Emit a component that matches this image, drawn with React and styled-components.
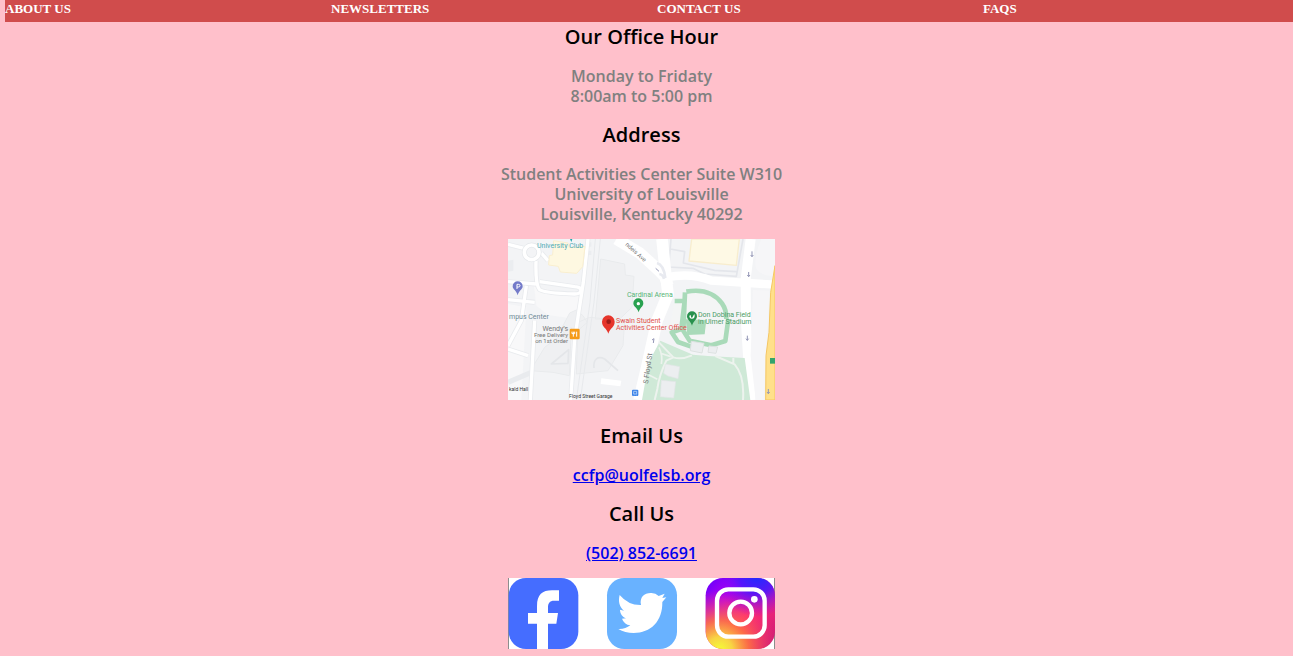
import React from 'react';
import styled, { createGlobalStyle } from 'styled-components';

const GlobalStyle = createGlobalStyle`
  body {
    margin: 0;
    background: pink;
  }
`;

const Nav = styled.nav`
  display: grid;
  grid-template-columns: repeat(4, 1fr);
  gap: 16px;
  height: 22px;
  margin-left: 5px;
  background: #d04c4c;
`;

const NavLink = styled.a`
  color: white;
  font: bold 13px/18px 'Liberation Serif', serif;
  text-decoration: none;
  text-transform: uppercase;
`;

const Main = styled.main`
  display: flex;
  flex-direction: column;
  align-items: center;
  margin-right: 10px;
  padding: 1px 0 7px;
  font-family: 'Comic Sans MS', 'Open Sans', sans-serif;
  text-align: center;
`;

const Heading = styled.h2`
  margin: 0;
  padding-top: ${(p) => p.$space || 0}px;
  font-size: 20px;
  line-height: 28px;
  font-weight: 600;
  color: black;
`;

const Text = styled.p`
  margin: 15px 0;
  font-size: 16px;
  line-height: 20px;
  font-weight: 600;
  color: gray;
`;

const TextLink = styled.a`
  color: #0000ee;
`;

const MapPicture = styled.svg`
  display: block;
  width: 267px;
  height: 161px;
  font-family: Roboto, sans-serif;
`;

const SocialPicture = styled.svg`
  display: block;
  width: 267px;
  height: 71px;
`;

const CampusMap = () => (
  <MapPicture viewBox="0 0 267 161" role="img" aria-label="Map of the campus">
    <rect width="267" height="161" fill="#f3f4f6" />
    <g transform="scale(.33333)" fill="none" strokeLinejoin="round">
      <path d="M0 195 55 205 40 483H0z M78 142 215 170 205 240 120 228 85 200z" fill="#f8f8f9" />
      <path d="M278 60 350 75 352 108 378 112 372 205 335 240 262 240z M185 222 205 213 225 230 238 250 180 300 160 270z M67 395 110 325 190 265 184 410 135 400z M210 250 245 235 350 245 345 320 300 395 205 405z" fill="#eff0f2" stroke="#e9ebed" strokeWidth="3" />
      <path d="M0 65 16 62V95L0 98z M236 10h14v13h-14z M236 35h14v13h-14z" fill="#ebedf0" />
      <path d="M258 387C255 360 270 350 290 360L330 395 M130 375 182 332 180 373z" stroke="#e4e6e9" strokeWidth="5" />
      <path d="M0 16 48 28M100 42 120 65M0 128 84 135M84 65Q82 135 94 151Q105 162 200 165C225 165 225 144 200 143L95 128 M240 0 226 130 200 300 188 483 M0 182 80 190 M55 140 40 245 0 320 M80 245 67 483 M0 330 60 350 M0 430 70 400" stroke="#e9ebee" strokeWidth="15" />
      <path d="M262 0 246 190 205 483 M277 0 258 190 217 483" stroke="#e7e9ec" strokeWidth="3" />
      <path d="M0 16 48 28M100 42 120 65M0 128 84 135M84 65Q82 135 94 151Q105 162 200 165C225 165 225 144 200 143L95 128 M240 0 226 130 200 300 188 483 M0 182 80 190 M55 140 40 245 0 320 M80 245 67 483 M0 330 60 350" stroke="#fff" strokeWidth="10" />
      <circle cx="71" cy="40" r="22" stroke="#e4e7ea" strokeWidth="15" />
      <circle cx="71" cy="40" r="22" stroke="#fff" strokeWidth="11" />
      <path d="M137 5 180 12 183 26 231 22 224 83 206 103 157 99 151 82 122 78 124 50 134 48z" fill="#fef8e1" stroke="#faefcf" strokeWidth="3" />
      <path d="M489 0 482 84 555 88 590 105 685 112 705 0 M487 30 530 38 526 72 620 94 685 98" stroke="#e4e6eb" strokeWidth="5" />
      <path d="M551 0 543 66 685 79 694 0z" fill="#fef9e5" stroke="#f8edce" strokeWidth="4" />
      <path d="M325 0 395 42 450 92 470 112 480 140M462 0 472 95 480 165 447 245 415 390 393 483" stroke="#fff" strokeWidth="35" />
      <path d="M475 115Q550 100 610 125L801 137" stroke="#fff" strokeWidth="25" />
      <path d="M728 0 713 120 714 250 728 483" stroke="#fff" strokeWidth="30" />
      <path d="M447 72q20 5 25 45M454 105q12 2 14 15" stroke="#e8eaf0" strokeWidth="8" />
      <path d="M457 305 555 347 600 351 710 357 727 483H402L422 370z" fill="#cfe9d7" />
      <path d="M453 310 496 355 475 365Q453 410 448 450L440 483M496 355Q520 363 552 349M622 351 680 376Q710 410 705 483M676 357V373" stroke="#edf3ee" strokeWidth="6" />
      <path d="M423 408 448 421M453 325Q465 350 460 375M458 343 488 353" stroke="#edf3ee" strokeWidth="5" />
      <path d="M472 375 515 383 510 419 480 411 467 403z M460 424 503 428 497 477 457 473z" fill="#eceef0" stroke="#e3e6e7" strokeWidth="2" />
      <path d="M500 179 530 179 535 155Q620 145 655 225L666 240 660 304 630 320 560 315 550 330 520 312 484 285 490 240z" fill="#f4f5f5" />
      <path d="M535 158Q606 145 642 193Q656 213 655 240M661 240 652 306 610 319 545 305 526 275 531 160 M500 186 530 186 520 270 491 280 510 309 550 323" stroke="#a9dab9" strokeWidth="14" />
      <path d="M533 241 595 243 590 286 538 288z" fill="#a9dab9" />
      <path d="M550 307 588 313 582 342 547 335z M603 321 629 324 624 343 600 340z" fill="#eceef0" stroke="#dde2e1" strokeWidth="3" />
      <path d="M760 0Q735 60 745 90Q760 112 801 112V0z M735 153 784 155 779 245 767 483H743L728 350z" fill="#f6f6f8" />
      <path d="M801 80 788 160 783 280 774 350 773 483H801z" fill="#ffe08a" stroke="#f5c662" strokeWidth="3" />
      <path d="M692 37v16l-4-5m4 5 4-5" transform="translate(40 0)" stroke="#9295b5" strokeWidth="3" />
      <path d="M722 99v14l-4-5m4 5 4-5M443 88l10 9M436 312l2-13-6 4M718 290v14l-4-5m4 5 4-5M781 450v14l-4-5m4 5 4-5" stroke="#9295b5" strokeWidth="3" />
      <path d="M786 357h15v17h-15z" fill="#32a46b" />
      <path d="M280 418 340 425 337 442 278 435z" fill="#fff" />
      <path d="M29 169C25 154 14 152 14 142a15 15 0 1 1 30 0c0 10-11 12-15 27z" fill="#747bc9" />
      <path d="M27 150V136h4q5 0 5 4t-5 4h-4" stroke="#fff" strokeWidth="3" />
      <path d="M392 220C388 206 376 204 376 193a15 15 0 1 1 30 0c0 11-11 13-14 27z" fill="#28a150" />
      <circle cx="391" cy="194" r="5" fill="#fff" />
      <path d="M552 260C548 246 537 243 537 232a15 15 0 1 1 30 0c0 11-11 14-15 28z" fill="#28914d" />
      <path d="M544 230q0 9 8 9t8-9-5 2-7-4z" fill="#fff" />
      <path d="M301 284C296 266 282 265 282 248a19 19 0 1 1 38 0c0 17-14 18-19 36z" fill="#e6352b" />
      <circle cx="302" cy="248" r="7" fill="#9f1d19" />
      <rect x="185" y="269" width="30" height="32" rx="4" fill="#f59b18" />
      <path d="M196 278v15m-4-15v6h8v-6m6 0v15" stroke="#fff" strokeWidth="3" />
      <rect x="372" y="452" width="19" height="19" rx="3" fill="#3c83e8" />
      <path d="M377 457h9v8h-9z M377 468h2m5 0h2" stroke="#d5e7fc" strokeWidth="2" />
      <path d="M186 0h7l-3 9z" fill="#25a6af" />
    </g>
    <g fontSize="6">
      <text x="29" y="9" fontSize="7" fill="#4eabb4">University Club</text>
      <text x="1" y="80" fontSize="7" fill="#6f8995">mpus Center</text>
      <text x="119" y="58" fontSize="7" fill="#55b477">Cardinal Arena</text>
      <text x="190" y="78" fontSize="7" fill="#4b9c68">Don Dobina Field</text>
      <text x="190" y="85" fontSize="7" fill="#4b9c68">in Ulmer Stadium</text>
      <text x="108" y="84" fontSize="7" fill="#e1504b">Swain Student</text>
      <text x="108" y="91" fontSize="7" fill="#e1504b">Activities Center Office</text>
      <g fill="#777" textAnchor="end">
        <text x="60" y="92" fontSize="7">Wendy’s</text>
        <text x="60" y="98">Free Delivery</text>
        <text x="60" y="104">on 1st Order</text>
      </g>
      <text x="1" y="152" fontSize="5" fill="#333">kald Hall</text>
      <text x="61" y="159" fontSize="5" fill="#333">Floyd Street Garage</text>
      <text transform="translate(140 145) rotate(-82)" fontSize="7" fill="#777">S Floyd St</text>
      <text transform="translate(117 6) rotate(42)" fontSize="6" fill="#777">ndeis Ave</text>
    </g>
  </MapPicture>
);

const SocialIcons = () => (
  <SocialPicture viewBox="0 0 801 213" role="img" aria-label="Facebook, Twitter and Instagram">
    <defs>
      <linearGradient id="insta" x1="0" y1="0" x2="1" y2="1">
        <stop offset="0" stopColor="#5f00ff" />
        <stop offset=".28" stopColor="#b500ee" />
        <stop offset=".55" stopColor="#ff277b" />
        <stop offset="1" stopColor="#c51c72" />
      </linearGradient>
      <radialGradient id="instaWarm" cx=".2" cy="1.02" r=".85">
        <stop offset="0" stopColor="#f4ff35" />
        <stop offset=".22" stopColor="#f8d444" />
        <stop offset=".5" stopColor="#ff773f" stopOpacity=".85" />
        <stop offset="1" stopColor="#ff316f" stopOpacity="0" />
      </radialGradient>
      <radialGradient id="instaBlue" cx=".75" cy="-.05" r=".6">
        <stop offset="0" stopColor="#1830ff" />
        <stop offset=".45" stopColor="#4a16ff" stopOpacity=".9" />
        <stop offset="1" stopColor="#8a00ff" stopOpacity="0" />
      </radialGradient>
    </defs>
    <rect width="801" height="213" fill="#fff" />
    <path d="M1 0v213M800 0v213" stroke="#777" strokeWidth="3" />
    <rect x="2" width="209" height="213" rx="52" fill="#456dff" />
    <path d="M87 213V137H60V105H87V85C87 49 103 37 132 37h21v31h-14c-15 0-19 8-19 21v16h30l-5 32h-25v76z" fill="#fff" />
    <rect x="297" width="210" height="213" rx="52" fill="#69b2ff" />
    <path d="M335 51Q361 82 399 81C394 58 409 45 428 45Q442 44 452 54L470 47 463 60 475 58 463 72C464 130 428 165 377 165Q351 165 331 153 352 154 367 142 348 139 342 122L354 121C343 117 336 106 336 95L348 98C334 87 330 70 335 51z" fill="#fff" />
    <rect x="593" width="208" height="213" rx="52" fill="url(#insta)" />
    <rect x="593" width="208" height="213" rx="52" fill="url(#instaWarm)" />
    <rect x="593" width="208" height="213" rx="52" fill="url(#instaBlue)" />
    <g fill="none" stroke="#fff" strokeWidth="13">
      <rect x="627" y="34" width="143" height="142" rx="34" />
      <circle cx="698" cy="105" r="34" />
    </g>
    <circle cx="739" cy="64" r="10" fill="#fff" />
  </SocialPicture>
);

export default function App() {
  return (
    <>
      <GlobalStyle />
      <Nav>
        <NavLink href="#about">About Us</NavLink>
        <NavLink href="#newsletters">Newsletters</NavLink>
        <NavLink href="#contact">Contact Us</NavLink>
        <NavLink href="#faqs">FAQs</NavLink>
      </Nav>
      <Main>
        <Heading>Our Office Hour</Heading>
        <Text>
          Monday to Fridaty
          <br />
          8:00am to 5:00 pm
        </Text>
        <Heading>Address</Heading>
        <Text>
          Student Activities Center Suite W310
          <br />
          University of Louisville
          <br />
          Louisville, Kentucky 40292
        </Text>
        <CampusMap />
        <Heading $space={22}>Email Us</Heading>
        <Text>
          <TextLink href="mailto:ccfp@uolfelsb.org">ccfp@uolfelsb.org</TextLink>
        </Text>
        <Heading>Call Us</Heading>
        <Text>
          <TextLink href="tel:+15028526691">(502) 852-6691</TextLink>
        </Text>
        <SocialIcons />
      </Main>
    </>
  );
}
